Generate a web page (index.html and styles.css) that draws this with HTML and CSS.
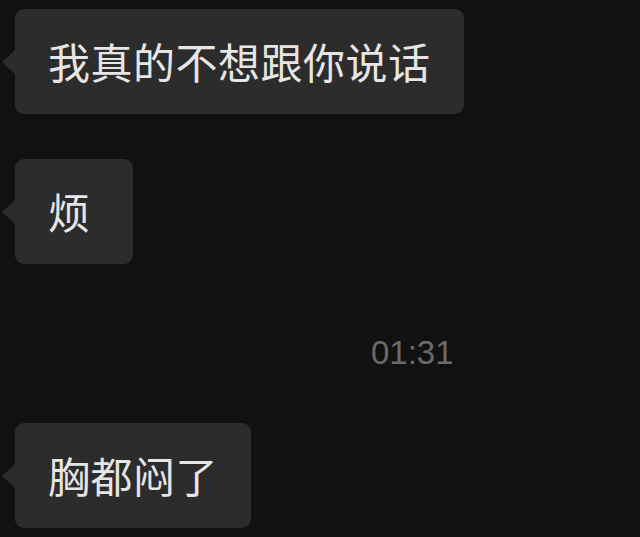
FILE: index.html
```html
<!DOCTYPE html>
<html lang="zh">
<head>
<meta charset="utf-8">
<link rel="stylesheet" href="styles.css">
</head>
<body>
<div class="chat">
  <div class="row"><div class="bubble">我真的不想跟你说话</div></div>
  <div class="row row-gap"><div class="bubble">烦</div></div>
  <div class="time">01:31</div>
  <div class="row"><div class="bubble">胸都闷了</div></div>
</div>
</body>
</html>
```
FILE: styles.css
```css
html, body {
  margin: 0;
  padding: 0;
  background: #111111;
  height: 100%;
  overflow: hidden;
}
.chat {
  display: flex;
  flex-direction: column;
  padding: 9px 0 0 15px;
}
.row {
  display: flex;
}
.row-gap {
  margin-top: 45px;
}
.bubble {
  position: relative;
  background: #2c2c2c;
  color: #e6e6e6;
  border-radius: 9px;
  height: 105px;
  min-width: 118px;
  box-sizing: border-box;
  padding: 0 33px 2px;
  display: flex;
  align-items: center;
  font-family: "Noto Sans CJK SC", sans-serif;
  font-size: 42px;
  letter-spacing: 0.5px;
}
.bubble::before {
  content: "";
  position: absolute;
  left: -13px;
  top: 41px;
  border-top: 12px solid transparent;
  border-bottom: 12px solid transparent;
  border-right: 13px solid #2c2c2c;
}
.time {
  margin: 71px 0 52px 356px;
  font-family: "Liberation Sans", Arial, sans-serif;
  font-size: 33px;
  color: #6a6a6a;
  line-height: 36px;
}
```
